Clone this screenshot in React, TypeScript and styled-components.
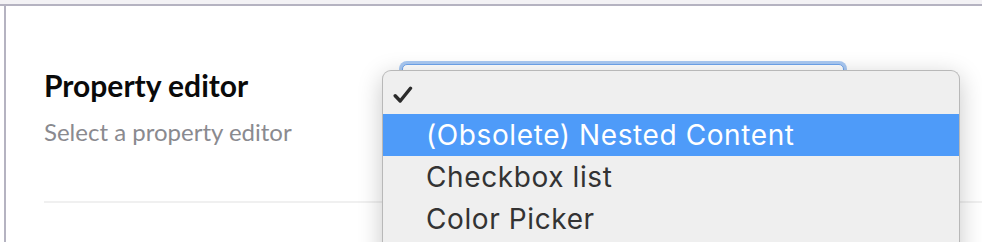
import React, { FunctionComponent } from "react";
import styled, { createGlobalStyle } from "styled-components";

const GlobalStyle = createGlobalStyle`
    html, body {
        margin: 0;
        padding: 0;
        background: #ffffff;
        overflow: hidden;
    }
`;

type Option = {
    label: string;
    selected?: boolean;
};

const options: Option[] = [
    { label: "(Obsolete) Nested Content", selected: true },
    { label: "Checkbox list" },
    { label: "Color Picker" },
];

const CheckIcon: FunctionComponent = () => (
    <svg width="20" height="18" viewBox="0 0 20 18">
        <path
            d="M2.2 9.8 L7.2 15 L17.5 2.3"
            fill="none"
            stroke="#2b2b2b"
            strokeWidth="3.4"
            strokeLinecap="round"
            strokeLinejoin="round"
        />
    </svg>
);

export default function App() {
    return (
        <Page>
            <GlobalStyle />
            <TopStrip />
            <Body>
                <Gutter />
                <Panel>
                    <PropertyRow>
                        <Label>
                            <Title>Property editor</Title>
                            <Description>Select a property editor</Description>
                        </Label>
                        <SelectWrap>
                            <SelectBox />
                            <Menu>
                                <CheckRow>
                                    <CheckIcon />
                                </CheckRow>
                                {options.map((option) => (
                                    <MenuItem
                                        key={option.label}
                                        selected={option.selected}
                                    >
                                        {option.label}
                                    </MenuItem>
                                ))}
                            </Menu>
                        </SelectWrap>
                    </PropertyRow>
                </Panel>
            </Body>
        </Page>
    );
}

const Page = styled.div`
    width: 982px;
    height: 242px;
    overflow: hidden;
    display: flex;
    flex-direction: column;
`;

const TopStrip = styled.div`
    height: 4px;
    background: #f3f2f5;
    border-bottom: 2px solid #b5b3c1;
`;

const Body = styled.div`
    flex: 1;
    display: flex;
`;

const Gutter = styled.div`
    width: 4px;
    background: #ffffff;
    border-right: 2px solid #b5b3c1;
`;

const Panel = styled.div`
    flex: 1;
    padding-left: 38px;
`;

const PropertyRow = styled.div`
    display: flex;
    height: 197px;
    border-bottom: 2px solid #f0f0f0;
    box-sizing: border-box;
`;

const Label = styled.div`
    width: 355px;
    padding-top: 61px;
    font-family: Lato, "Open Sans", sans-serif;
`;

const Title = styled.div`
    font-size: 30px;
    font-weight: 700;
    line-height: 36px;
    color: #0a0a0a;
`;

const Description = styled.div`
    margin-top: 14px;
    font-size: 24px;
    line-height: 29px;
    color: #8a8a8f;
`;

const SelectWrap = styled.div`
    position: relative;
    width: 448px;
    padding-top: 58px;
`;

const SelectBox = styled.div`
    height: 40px;
    margin: 0 3px;
    border: 1px solid #6ea4ec;
    border-radius: 5px;
    box-shadow: 0 0 0 3px #a9c9f3;
    background: #ffffff;
`;

const Menu = styled.div`
    position: absolute;
    top: 64px;
    left: -17px;
    width: 578px;
    height: 200px;
    box-sizing: border-box;
    background: #efefef;
    border: 1px solid #b8b8b8;
    border-bottom: none;
    border-radius: 9px 9px 0 0;
    box-shadow: 0 6px 24px rgba(0, 0, 0, 0.22);
    font-family: Inter, "Liberation Sans", sans-serif;
`;

const CheckRow = styled.div`
    height: 43px;
    display: flex;
    align-items: center;
    padding-left: 10px;
    padding-top: 4px;
    box-sizing: border-box;
`;

const MenuItem = styled.div<{ selected?: boolean }>`
    height: 42px;
    display: flex;
    align-items: center;
    padding-left: 43px;
    font-size: 28px;
    letter-spacing: 0.6px;
    color: ${({ selected }) => (selected ? "#ffffff" : "#333333")};
    background: ${({ selected }) => (selected ? "#4e9bf9" : "transparent")};
    white-space: nowrap;
`;
